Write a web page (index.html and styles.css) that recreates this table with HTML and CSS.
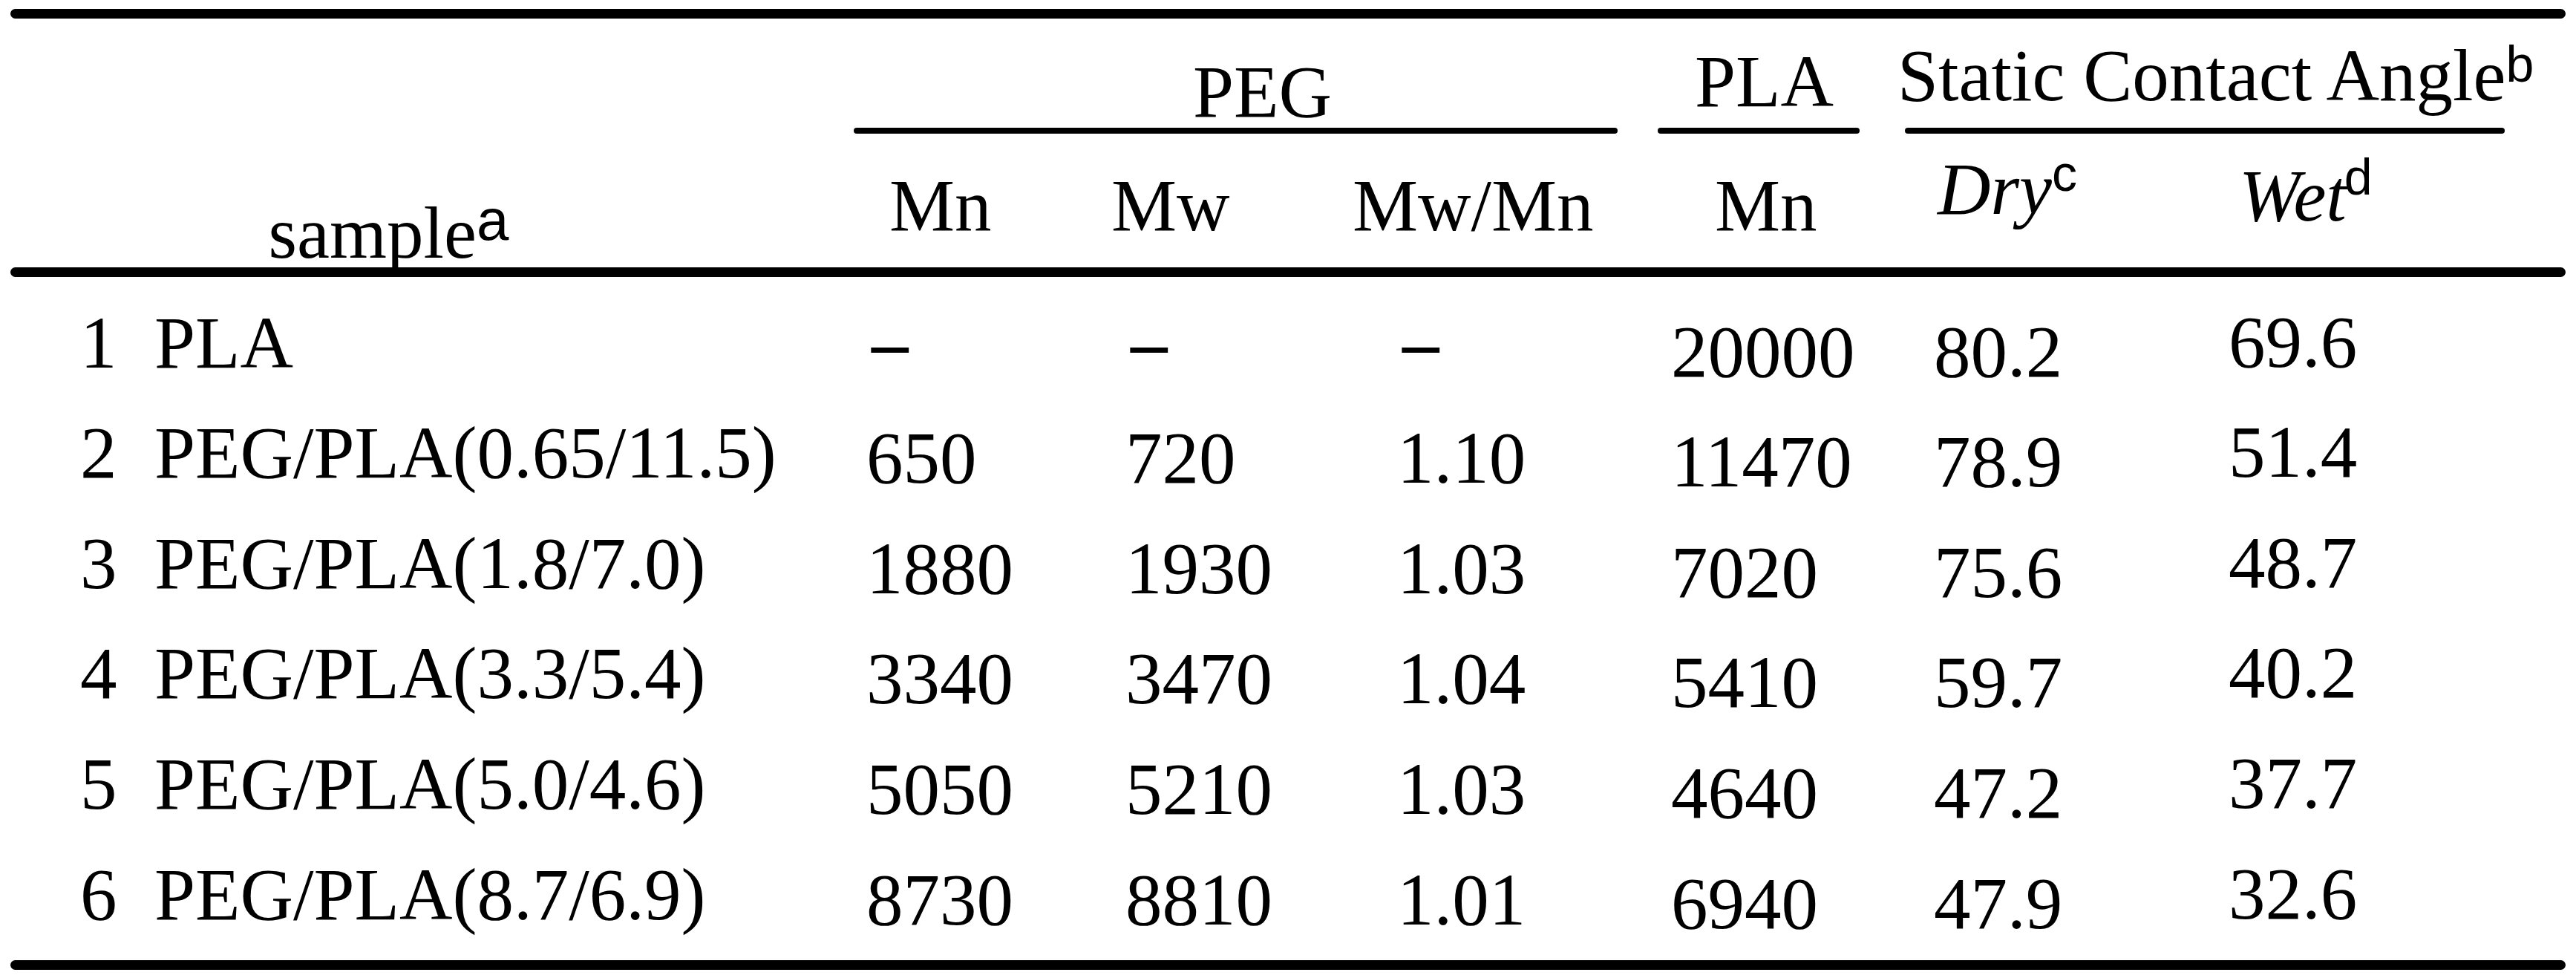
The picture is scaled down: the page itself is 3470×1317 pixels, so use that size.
FILE: index.html
```html
<!DOCTYPE html>
<html lang="en">
<head>
  <meta charset="UTF-8" />
  <meta name="viewport" content="width=device-width, initial-scale=1.0"/>
  <title>PEG/PLA samples - contact angle</title>
  <link rel="stylesheet" href="styles.css">
</head>
<body>
  <div class="table">
    <div class="rule-thick"></div>

    <!-- Header: two levels, grouped columns -->
    <div class="head">
      <div class="head-sample">sample<span class="sup sup-a">a</span></div>

      <div class="group group-peg">
        <div class="group-title">PEG</div>
        <div class="group-rule"></div>
        <div class="group-subs">
          <div class="sub">Mn</div>
          <div class="sub">Mw</div>
          <div class="sub">Mw/Mn</div>
        </div>
      </div>

      <div class="group group-pla">
        <div class="group-title">PLA</div>
        <div class="group-rule"></div>
        <div class="group-subs">
          <div class="sub">Mn</div>
        </div>
      </div>

      <div class="group group-sca">
        <div class="group-title">Static Contact Angle<span class="sup">b</span></div>
        <div class="group-rule"></div>
        <div class="group-subs">
          <div class="sub sub-dry"><i>Dry</i><span class="sup sup-c">c</span></div>
          <div class="sub sub-wet"><i>Wet</i><span class="sup sup-d">d</span></div>
        </div>
      </div>
    </div>

    <div class="rule-thick"></div>

    <!-- Data rows -->
    <div class="rows">
      <div class="row">
        <div class="cell">1</div>
        <div class="cell">PLA</div>
        <div class="cell dash">&ndash;</div>
        <div class="cell dash">&ndash;</div>
        <div class="cell dash">&ndash;</div>
        <div class="cell pla">20000</div>
        <div class="cell dry">80.2</div>
        <div class="cell wet">69.6</div>
      </div>
      <div class="row">
        <div class="cell">2</div>
        <div class="cell">PEG/PLA(0.65/11.5)</div>
        <div class="cell peg">650</div>
        <div class="cell peg">720</div>
        <div class="cell peg">1.10</div>
        <div class="cell pla">11470</div>
        <div class="cell dry">78.9</div>
        <div class="cell wet">51.4</div>
      </div>
      <div class="row">
        <div class="cell">3</div>
        <div class="cell">PEG/PLA(1.8/7.0)</div>
        <div class="cell peg">1880</div>
        <div class="cell peg">1930</div>
        <div class="cell peg">1.03</div>
        <div class="cell pla">7020</div>
        <div class="cell dry">75.6</div>
        <div class="cell wet">48.7</div>
      </div>
      <div class="row">
        <div class="cell">4</div>
        <div class="cell">PEG/PLA(3.3/5.4)</div>
        <div class="cell peg">3340</div>
        <div class="cell peg">3470</div>
        <div class="cell peg">1.04</div>
        <div class="cell pla">5410</div>
        <div class="cell dry">59.7</div>
        <div class="cell wet">40.2</div>
      </div>
      <div class="row">
        <div class="cell">5</div>
        <div class="cell">PEG/PLA(5.0/4.6)</div>
        <div class="cell peg">5050</div>
        <div class="cell peg">5210</div>
        <div class="cell peg">1.03</div>
        <div class="cell pla">4640</div>
        <div class="cell dry">47.2</div>
        <div class="cell wet">37.7</div>
      </div>
      <div class="row">
        <div class="cell">6</div>
        <div class="cell">PEG/PLA(8.7/6.9)</div>
        <div class="cell peg">8730</div>
        <div class="cell peg">8810</div>
        <div class="cell peg">1.01</div>
        <div class="cell pla">6940</div>
        <div class="cell dry">47.9</div>
        <div class="cell wet">32.6</div>
      </div>
    </div>

    <div class="rule-thick bottom"></div>
  </div>
</body>
</html>
```

FILE: styles.css
```css
body {
  margin: 0;
  background: #fff;
  color: #000;
  font-family: "Liberation Serif", "Times New Roman", serif;
  font-size: 99px;
  line-height: 90px;
}

.table {
  width: 3442px;
  margin-left: 14px;
  padding-top: 12px;
}

/* Thick horizontal rules */
.rule-thick {
  height: 13px;
  background: #000;
  border-radius: 7px;
}

.rule-thick.bottom {
  margin-top: 28.4px;
}

/* Superscript notes */
.sup {
  font-family: "Liberation Sans", Arial, sans-serif;
  font-size: 68px;
  line-height: 0;
  vertical-align: 25px;
}

.sup-a {
  font-size: 78px;
  vertical-align: 24px;
}

.sup-c {
  vertical-align: 31px;
}

.sup-d {
  vertical-align: 35px;
  margin-left: -3px;
}

/* Header */
.head {
  display: grid;
  grid-template-columns: 1136px 1029px 54px 272px 61px 808px 1fr;
  height: 335px;
}

.head-sample {
  grid-column: 1;
  padding: 243.6px 0 0 347.5px;
  white-space: nowrap;
}

.group {
  display: flex;
  flex-direction: column;
  white-space: nowrap;
}

.group-peg { grid-column: 2; }
.group-pla { grid-column: 4; }
.group-sca { grid-column: 6; }

.group-title {
  height: 147px;
  box-sizing: border-box;
}

.group-peg .group-title {
  padding: 53.6px 0 0 457px;
}

.group-pla .group-title {
  padding: 39.6px 0 0 50px;
}

.group-sca .group-title {
  padding-top: 31.6px;
  margin-left: -10px;
}

.group-rule {
  height: 8px;
  background: #000;
  border-radius: 4px;
}

.group-subs {
  display: grid;
  align-items: start;
}

.group-peg .group-subs {
  grid-template-columns: 299px 325px 1fr;
  padding-left: 48px;
}

.group-pla .group-subs {
  padding-left: 77px;
}

.group-sca .group-subs {
  grid-template-columns: 406px 1fr;
  padding-left: 44px;
}

.sub {
  padding-top: 51.6px;
}

.sub-dry {
  padding-top: 29.6px;
}

.sub-wet {
  padding-top: 38.6px;
}

/* Body rows */
.row {
  display: grid;
  grid-template-columns: 100px 959px 349px 366px 369px 354px 397px 1fr;
  height: 148.6px;
  padding-left: 94px;
  align-items: start;
}

.cell {
  padding-top: 43.6px;
  white-space: nowrap;
}

.cell.peg {
  padding-top: 50.6px;
}

.cell.pla,
.cell.dry {
  padding-top: 55.6px;
}

.cell.wet {
  padding-top: 42.6px;
}

.cell.dash {
  padding: 44px 0 0 7px;
  font-weight: 700;
}
```
